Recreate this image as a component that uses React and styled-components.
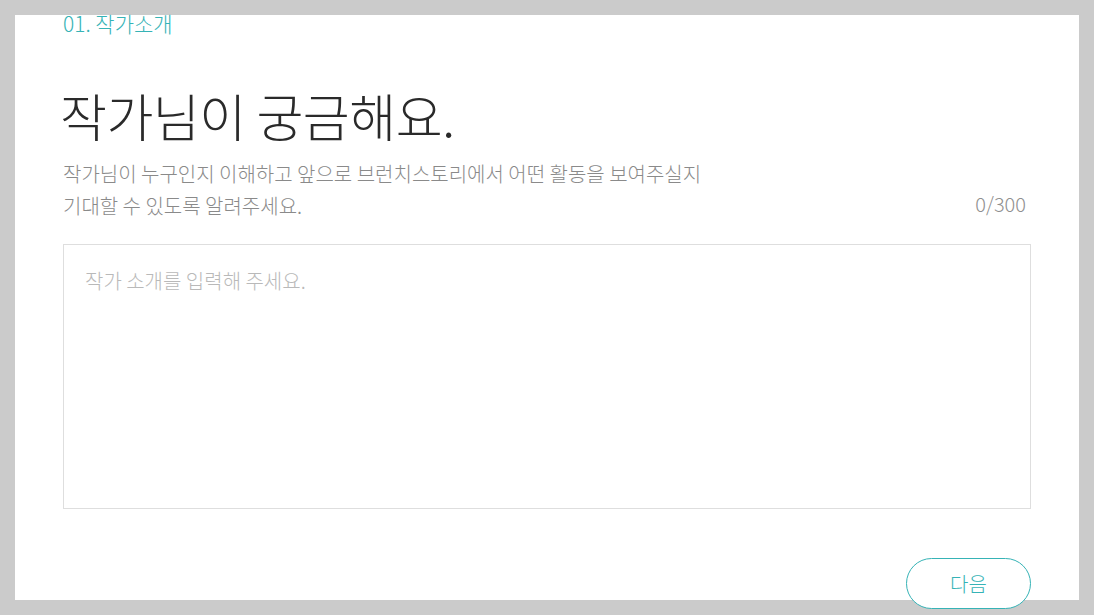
import React, { useState } from 'react'
import styled, { createGlobalStyle } from 'styled-components'

const GlobalStyle = createGlobalStyle`
  html, body {
    margin: 0;
    padding: 0;
    background: #cbcbcb;
    font-family: "Noto Sans CJK KR", "Noto Sans", sans-serif;
    overflow: hidden;
  }
`

const Page = styled.div`
  padding: 15px 15px 0 15px;
  height: 615px;
  box-sizing: border-box;
`

const Panel = styled.section`
  background: #fff;
  height: 585px;
  box-sizing: border-box;
  padding: 0 48px;
  display: flex;
  flex-direction: column;

  & > * {
    flex-shrink: 0;
  }
`

const Step = styled.div`
  color: #36b3b6;
  font-size: 21px;
  font-weight: 300;
  line-height: 22px;
  margin-top: -3px;
`

const Title = styled.h1`
  margin: 53px 0 0 -3px;
  font-size: 51px;
  font-weight: 300;
  line-height: 56px;
  color: #2a2a2a;
  letter-spacing: -0.5px;
`

const IntroRow = styled.div`
  display: flex;
  justify-content: space-between;
  align-items: flex-end;
  margin-top: 15px;
`

const Intro = styled.p`
  margin: 0;
  color: #8a8a8a;
  font-size: 20px;
  font-weight: 300;
  line-height: 32px;
`

const Counter = styled.span`
  color: #8f8f8f;
  font-size: 20px;
  font-weight: 300;
  line-height: 32px;
  margin: 0 5px 2px 0;
`

const Field = styled.textarea`
  margin-top: 22px;
  height: 265px;
  box-sizing: border-box;
  border: 1px solid #dedede;
  padding: 23px 21px;
  resize: none;
  outline: none;
  font-family: inherit;
  font-size: 20px;
  font-weight: 300;
  line-height: 26px;
  color: #333;

  &::placeholder {
    color: #b9b9b9;
  }
`

const Actions = styled.div`
  display: flex;
  justify-content: flex-end;
  margin-top: 49px;
`

const NextButton = styled.button`
  width: 125px;
  height: 51px;
  border: 1px solid #36b3b6;
  border-radius: 26px;
  background: #fff;
  color: #36b3b6;
  font-family: inherit;
  font-size: 20px;
  font-weight: 300;
  cursor: pointer;
  margin-right: 0;
`

const App = () => {
  const [text, setText] = useState('')

  return (
    <Page>
      <GlobalStyle />
      <Panel>
        <Step>01. 작가소개</Step>
        <Title>작가님이 궁금해요.</Title>
        <IntroRow>
          <Intro>
            작가님이 누구인지 이해하고 앞으로 브런치스토리에서 어떤 활동을 보여주실지
            <br />
            기대할 수 있도록 알려주세요.
          </Intro>
          <Counter>{text.length}/300</Counter>
        </IntroRow>
        <Field
          placeholder="작가 소개를 입력해 주세요."
          maxLength={300}
          value={text}
          onChange={e => setText(e.target.value)}
        />
        <Actions>
          <NextButton type="button">다음</NextButton>
        </Actions>
      </Panel>
    </Page>
  )
}

export default App
